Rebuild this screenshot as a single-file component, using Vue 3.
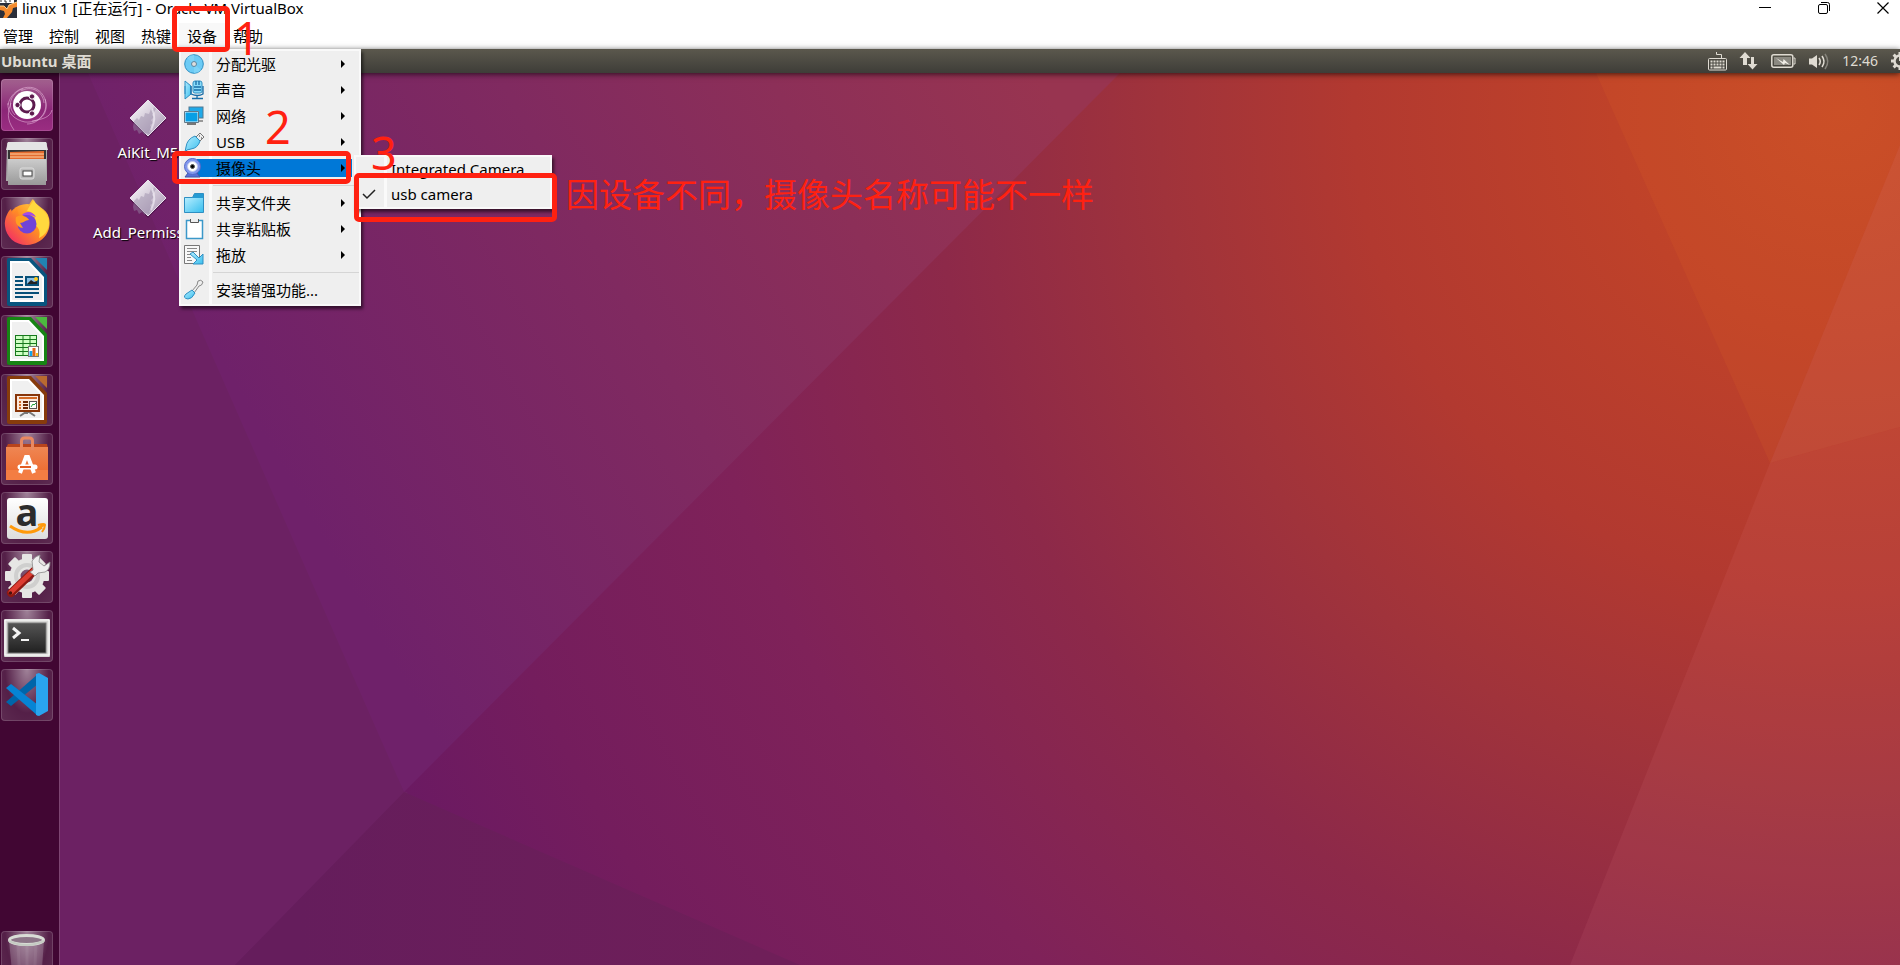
<script setup>
const menuNames = ['管理', '控制', '视图', '热键', '设备', '帮助']
const deviceItems = [
  { id: 'disc', label: '分配光驱', sub: true },
  { id: 'audio', label: '声音', sub: true },
  { id: 'network', label: '网络', sub: true },
  { id: 'usb', label: 'USB', sub: true },
  { id: 'webcam', label: '摄像头', sub: true, active: true },
  { id: 'sep1' },
  { id: 'folder', label: '共享文件夹', sub: true },
  { id: 'clipboard', label: '共享粘贴板', sub: true },
  { id: 'drag', label: '拖放', sub: true },
  { id: 'sep2' },
  { id: 'guest', label: '安装增强功能...' },
]
const cameras = [
  { label: 'Integrated Camera', checked: false },
  { label: 'usb camera', checked: true },
]
const shortcuts = [
  { label: 'AiKit_M5', clipped: false },
  { label: 'Add_Permiss', clipped: true },
]
const apps = ['dash', 'cabinet', 'firefox', 'writer', 'calc', 'impress', 'software', 'amazon', 'settings', 'terminal', 'code', 'trash']
const teeth = [0, 45, 90, 135, 180, 225, 270, 315]
</script>

<template>
  <div class="window">
    <header class="titlebar">
      <svg class="app-icon" width="17" height="18" viewBox="0 0 17 18">
        <rect width="17" height="18" fill="#2b2f3a" />
        <path d="M0 0h14v3H0z" fill="#fff" />
        <path d="M1 0v2M5 0v2h2M10 0v2" stroke="#333" fill="none" />
        <path d="M0 6h4l3 3 2-4 8-3v5l-4 1-1 4-5 6H3l2-4-1-3-4-1z" fill="#f58a2c" />
        <path d="M0 6h4l3 3 2-4 8-3" fill="none" stroke="#ffd08a" />
      </svg>
      <h1>linux 1 [正在运行] - Oracle VM VirtualBox</h1>
      <div class="controls">
        <button aria-label="最小化"><svg width="12" height="12" viewBox="0 0 12 12"><path d="M0 5.500h12" stroke="#000" /></svg></button>
        <button aria-label="还原"><svg width="12" height="12" viewBox="0 0 12 12" fill="none" stroke="#000"><rect x=".5" y="2.500" width="9" height="9" rx="1.500" /><path d="M3 .5h6.500a2 2 0 0 1 2 2V9" /></svg></button>
        <button aria-label="关闭"><svg width="12" height="12" viewBox="0 0 12 12"><path d="M.5.5l11 11M11.500.5l-11 11" stroke="#000" stroke-width="1.200" /></svg></button>
      </div>
    </header>

    <nav class="menubar">
      <button v-for="name in menuNames" :key="name" :class="{ open: name === '设备' }">{{ name }}</button>
    </nav>

    <div class="panel">
      <strong>Ubuntu 桌面</strong>
      <div class="tray">
        <svg width="19" height="19" viewBox="0 0 19 19" fill="none" stroke="#dfdbd2">
          <path d="M8.500 0v2.500h5V6" />
          <rect x=".5" y="6.500" width="18" height="11.500" rx="1" />
          <path d="M2.500 9.500h14M2.500 12.500h14" stroke-width="2" stroke-dasharray="2 1" />
          <path d="M2.500 15.500h2M5.500 15.500h8M14.500 15.500h2" stroke-width="2" />
        </svg>
        <svg width="18" height="18" viewBox="0 0 18 18" fill="#dfdbd2"><path d="M5 0l5.500 6H7v7H3V6H-.5zM12.500 17.500L7.500 12H11V5h3v7h3.500z" /></svg>
        <svg width="25" height="14" viewBox="0 0 25 14" fill="none" stroke="#dfdbd2">
          <rect x=".8" y=".8" width="21" height="12.400" rx="2" stroke-width="1.500" />
          <rect x="3" y="3" width="17" height="8" fill="#8b8981" stroke="none" />
          <path d="M22.500 4h1.500v6h-1.500" />
          <path d="M5 4l7 4 .5-3L19 11l-5-2-1 2z" fill="#efece5" stroke="none" />
        </svg>
        <svg width="20" height="17" viewBox="0 0 20 17" fill="none" stroke="#dfdbd2" stroke-width="1.600">
          <path d="M0 5.500h3L8 2v13l-5-3.500H0z" fill="#dfdbd2" stroke="none" />
          <path d="M10 5q2.500 3.500 0 7" /><path d="M13 3q4 5.500 0 11" /><path d="M16 1q5.500 7.500 0 15" stroke="#85837b" />
        </svg>
        <time>12:46</time>
        <svg class="power" width="18" height="18" viewBox="-9 -9 18 18">
          <rect v-for="t in teeth" :key="t" x="-1.500" y="-9" width="3" height="4" fill="#dfdbd2" :transform="`rotate(${t})`" />
          <circle r="5.500" fill="none" stroke="#dfdbd2" stroke-width="2.500" />
          <path d="M0-5v5" stroke="#dfdbd2" stroke-width="2" />
        </svg>
      </div>
    </div>

    <main class="workspace">
      <aside class="launcher">
        <button v-for="app in apps" :key="app" class="tile" :class="app" :aria-label="app">
          <svg v-if="app === 'dash'" viewBox="0 0 52 52" fill="none">
            <g stroke="#f4c9ea" stroke-opacity=".5">
              <path d="M7 26C10 8 36 0 44 20c4 12-6 25-18 25" />
              <path d="M44 20c5 15-6 24-20 23C14 41 6 34 7 24" />
              <path d="M20 12c10-6 22 0 23 12M14 36C4 26 12 12 22 10M31 42c12-2 18-4 20-11M13 51C5 40 7 32 10 24" />
            </g>
            <circle cx="26" cy="26" r="14" fill="#fff" />
            <circle cx="26" cy="26" r="7" stroke="#5d1a4e" stroke-width="3" />
            <g fill="#5d1a4e" stroke="#fff"><circle cx="16.500" cy="26" r="2.700" /><circle cx="31" cy="17.500" r="2.700" /><circle cx="31" cy="34.500" r="2.700" /></g>
          </svg>
          <svg v-else-if="app === 'cabinet'" viewBox="0 0 52 52">
            <path d="M6 5l2-1h36l2 1v38H5z" fill="#aaa" /><path d="M7 4h38l2 8H5z" fill="#e4e4e4" />
            <path d="M7 12h38v10H7z" fill="#353535" /><path d="M9 14l34-1v9H9z" fill="#e46b2e" />
            <path d="M9 16h34M9 19h34" stroke="#ffd2a2" /><path d="M7 21h38v26H7z" fill="url(#silver)" />
            <rect x="19" y="30" width="14" height="11" rx="2" fill="#bbb" stroke="#ddd" /><rect x="22" y="33" width="9" height="5" fill="#fff" stroke="#444" />
          </svg>
          <svg v-else-if="app === 'firefox'" viewBox="0 0 52 52">
            <circle cx="26" cy="27" r="20" fill="url(#fox)" />
            <path d="M4 29C3 22 7 14 10 12l2 6 4-7 2 8 9-2-5 12 5 5c10-1 11-10 6-15l-6-5C26 9 31 3 32 2c2 7 14 9 16 19 3 12-5 26-22 27C14 48 5 40 4 29z" fill="url(#fox)" />
            <path d="M26 14c2-5 5-8 7-11 2 7 15 11 15 23 0 7-5 13-10 15 2-7-1-12-5-13 4-8-2-14-7-14z" fill="#ffd83e" />
            <circle cx="26" cy="27" r="9.500" fill="#7044d8" />
            <path d="M15 20c5-3 12 0 13 3-4 0-5 3-9 3l3 5c-7-1-8-7-7-11z" fill="#ff9d22" />
            <path d="M21 18c5-5 11-3 14 2-4-2-8-2-14-2z" fill="#a44be8" />
          </svg>
          <svg v-else-if="app === 'writer' || app === 'calc' || app === 'impress'" viewBox="0 0 52 52">
            <path class="doc" d="M8 2h22l16 17v29q0 2-2 2H8q-2 0-2-2V4q0-2 2-2z" />
            <path d="M9 5h19l15 16v25H9z" fill="#fff" /><path d="M11 7h16l14 15v22H11z" fill="#f0f0f0" />
            <path class="doc-fold" d="M34 2h12v12z" />
            <g v-if="app === 'writer'" stroke="#075078" stroke-width="2">
              <path d="M14 21h8M14 25h8M14 29h8M14 33h24M14 37h24M14 41h18" />
              <rect x="25" y="21" width="12" height="8" fill="#8cc1e5" /><path d="M26 28l4-4 3 2 3-1v3z" fill="#222" stroke="none" /><circle cx="35" cy="23" r="1" fill="#ffcc20" stroke="#ffcc20" />
            </g>
            <g v-else-if="app === 'calc'">
              <rect x="14" y="20" width="22" height="21" fill="#16781d" />
              <path d="M15 22.500h20M15 26.500h20M15 30.500h20M15 34.500h20M15 38.500h20" stroke="#cfffc4" stroke-width="3" /><path d="M22 20v21M29 20v21" stroke="#16781d" />
              <rect x="27.500" y="31.500" width="10" height="10" fill="#fff" stroke="#777" /><path d="M30 41v-5" stroke="#12a4e8" stroke-width="3" /><path d="M33 41v-8" stroke="#e36718" stroke-width="3" /><path d="M36 41v-3" stroke="#fbbd17" stroke-width="2" />
            </g>
            <g v-else>
              <path d="M19 42l6-4h3l6 4M26 37v3" stroke="#777" fill="none" stroke-width="2" />
              <rect x="15" y="21" width="23" height="16" fill="#fce8dc" stroke="#873509" stroke-width="2" />
              <path d="M18 24h18" stroke="#d36a25" stroke-width="2" /><path d="M18 28h2M18 31h2M18 34h2" stroke="#d36a25" stroke-width="2" /><path d="M22 28h5M22 31h5M22 34h5" stroke="#6d2605" stroke-width="2" />
              <rect x="28.500" y="27.500" width="7" height="7" fill="#fff" stroke="#555" /><path d="M30 33l2-3 1 1 2-2" stroke="#21a43b" fill="none" />
            </g>
          </svg>
          <svg v-else-if="app === 'software'" viewBox="0 0 52 52">
            <path d="M7 11h39l1 4H5z" fill="#b8441c" /><path d="M5 14h42v33H5z" fill="url(#orange)" /><path d="M5 37h42v10H5z" fill="#f37d43" />
            <path d="M20.500 17V8q0-3 3-3h5q3 0 3 3v9" fill="none" stroke="#e98861" stroke-width="3" />
            <path d="M19 40l6-16h2l6 16" fill="none" stroke="#fff" stroke-width="4" /><path d="M19 34h15" stroke="#fff" stroke-width="5" stroke-linecap="round" /><path d="M19 34h11" stroke="#e35d22" stroke-width="2" />
          </svg>
          <svg v-else-if="app === 'amazon'" viewBox="0 0 52 52">
            <rect x="6" y="6" width="41" height="41" rx="3" fill="url(#paper)" />
            <text x="26" y="34" text-anchor="middle" font-size="38" font-weight="700" font-family="Open Sans, sans-serif" fill="#2c2c2c">a</text>
            <path d="M9 34q17 12 32 1" fill="none" stroke="#ff9a0b" stroke-width="3" /><path d="M37 33q7-2 7 0 0 3-3 7M43 33l-6 3" fill="none" stroke="#ff9a0b" stroke-width="2" />
          </svg>
          <svg v-else-if="app === 'settings'" viewBox="0 0 52 52">
            <g transform="translate(26 25)" fill="#e6e6e4"><rect v-for="t in teeth" :key="t" x="-5" y="-22" width="10" height="12" rx="1" :transform="`rotate(${t})`" /><circle r="12" fill="none" stroke="#e6e6e4" stroke-width="11" /><circle r="11" fill="none" stroke="#cfcfce" stroke-width="4" /></g>
            <path d="M10 42L33 20" stroke="#8f1912" stroke-width="8" stroke-linecap="round" /><path d="M10 41L32 20" stroke="#dc3c31" stroke-width="5" stroke-linecap="round" />
            <path d="M32 19l-1-9q3-5 8-6l-1 7 5 4 6-4q0 8-5 10l-7 1-3 3-5-4z" fill="#eee" stroke="#888" stroke-width=".8" /><circle cx="9.500" cy="42" r="1.700" fill="#47100d" />
          </svg>
          <svg v-else-if="app === 'terminal'" viewBox="0 0 52 52">
            <rect x="3" y="9" width="46" height="38" rx="1" fill="#d8d8d6" /><path d="M4 10h44v35H4z" fill="none" stroke="#fff" /><rect x="7" y="13" width="38" height="30" fill="url(#screen)" stroke="#777" />
            <path d="M12 18l6 5-6 5" fill="none" stroke="#f3f3f3" stroke-width="3" /><path d="M20 30h8" stroke="#f3f3f3" stroke-width="2" />
          </svg>
          <svg v-else-if="app === 'code'" viewBox="0 0 52 52">
            <path d="M5 33l5 4 27-22V5L5 33z" fill="#0065a9" /><path d="M5 19l5-4 27 21v11L5 19z" fill="#0684d4" /><path d="M35 5l3-1 9 5v33l-9 5-3-1z" fill="#2aa4ef" />
          </svg>
          <svg v-else viewBox="0 0 52 52">
            <path d="M8 9l4 43h28l3-43z" fill="#fff" opacity=".2" /><path d="M17 14l2 38M26 14v38M35 14l-2 38" stroke="#fff" opacity=".06" stroke-width="3" />
            <ellipse cx="25.500" cy="9" rx="17" ry="4.500" fill="#8d7588" stroke="#d9ddd6" stroke-width="3" /><path d="M8 10q17 8 35 0" fill="none" stroke="#c5cbc3" stroke-width="2" />
          </svg>
        </button>
      </aside>

      <section class="desktop">
        <svg class="wallpaper" viewBox="60 73 1840 892" preserveAspectRatio="none" aria-hidden="true">
          <defs>
            <radialGradient id="base" gradientUnits="userSpaceOnUse" cx="1840" cy="110" r="1620">
              <stop offset="0" stop-color="#c74a28" /><stop offset=".14" stop-color="#bf4229" /><stop offset=".3" stop-color="#b23930" /><stop offset=".42" stop-color="#a0333b" /><stop offset=".56" stop-color="#8d2949" /><stop offset=".72" stop-color="#7f2259" /><stop offset=".88" stop-color="#741d5d" /><stop offset="1" stop-color="#691963" />
            </radialGradient>
            <linearGradient id="upper" gradientUnits="userSpaceOnUse" x1="300" y1="500" x2="1040" y2="80">
              <stop offset="0" stop-color="#6f216a" /><stop offset=".45" stop-color="#802a60" /><stop offset="1" stop-color="#983450" />
            </linearGradient>
            <linearGradient id="foot" gradientUnits="userSpaceOnUse" x1="300" y1="960" x2="760" y2="960"><stop offset="0" stop-color="#651d5c" /><stop offset="1" stop-color="#6f1f59" /></linearGradient>
            <linearGradient id="silver" x2="0" y2="1"><stop stop-color="#ccc" /><stop offset="1" stop-color="#999" /></linearGradient>
            <linearGradient id="paper" x2="0" y2="1"><stop stop-color="#fff" /><stop offset="1" stop-color="#ddd" /></linearGradient>
            <linearGradient id="screen" x2="0" y2="1"><stop stop-color="#555" /><stop offset="1" stop-color="#202020" /></linearGradient>
            <linearGradient id="orange" x2="0" y2="1"><stop stop-color="#ef8653" /><stop offset="1" stop-color="#ec6528" /></linearGradient>
            <linearGradient id="fox" x1="1" x2="0" y2="1"><stop stop-color="#ffe344" /><stop offset=".5" stop-color="#ff8c25" /><stop offset="1" stop-color="#f01873" /></linearGradient>
            <linearGradient id="cyan" x2="1" y2="1"><stop stop-color="#b5edff" /><stop offset="1" stop-color="#39bfee" /></linearGradient>
            <linearGradient id="diamond" x2="1" y2="1"><stop stop-color="#fff" /><stop offset="1" stop-color="#a693b1" /></linearGradient>
          </defs>
          <path d="M60 73H1900V965H60z" fill="url(#base)" />
          <path d="M60 73H120L404 792 408 792 235 965H60z" fill="#6c2163" />
          <path d="M88 73H1120L404 792z" fill="url(#upper)" />
          <path d="M404 792L800 965H235z" fill="url(#foot)" />
          <path d="M1596 73H1900V145L1770 463z" fill="#ff8a20" fill-opacity=".08" />
          <path d="M1900 145V427L1770 463z" fill="#ffb090" fill-opacity=".11" />
          <path d="M1770 463l130-36V965H1570z" fill="#ff9aa0" fill-opacity=".08" />
        </svg>
        <ul class="shortcuts">
          <li v-for="item in shortcuts" :key="item.label">
            <svg width="40" height="40" viewBox="0 0 40 40">
              <path d="M20 2l18 19-18 18L2 21z" fill="#2d0d2c" opacity=".4" />
              <path d="M20 1l18 18-18 18L2 19z" fill="url(#diamond)" stroke="#e8e0ed" />
              <path d="M6 22l3-3 2 2 2-4 3 1 1-4 4 1 2-5 2 1 1-3 2 2-4 6 2 2-3 3 2 3-3 2 2 4-3 2 1 3-4-1-1 2-3-3-3 2-2-4-3 1-1-4z" fill="#968aa7" opacity=".45" />
              <path d="M24 10q5 9-1 21" fill="none" stroke="#f7f3fa" stroke-width="2" opacity=".6" />
            </svg>
            <span :class="{ clipped: item.clipped }">{{ item.label }}</span>
          </li>
        </ul>
      </section>
    </main>

    <div class="popup devices" role="menu">
      <template v-for="item in deviceItems" :key="item.id">
        <hr v-if="!item.label">
        <button v-else role="menuitem" :class="{ active: item.active }">
          <svg width="20" height="20" viewBox="0 0 20 20" fill="url(#cyan)" stroke="#2f8fc2">
            <g v-if="item.id === 'disc'"><circle cx="10" cy="10" r="9.300" fill="#6ccbf5" /><path d="M10 10L3 4Q6 1 10 1zM10 10l7 6q-3 3-7 3z" fill="#7dd3f7" stroke="none" /><circle cx="10" cy="10" r="2.500" fill="#ddd" stroke="#5b87a0" /></g>
            <g v-else-if="item.id === 'audio'"><path d="M1 1l6 5v8l-6 5zM1 6v8" /><rect x="9" y="1" width="9" height="12" rx="2" fill="#89dcfa" /><path d="M12 1v4M15 1v4M10 7h7M10 10h7M7 6v8q7 3 12 0V6M13 15v4M8 18.500h11" fill="none" stroke="#176ca6" stroke-width="1.300" /></g>
            <g v-else-if="item.id === 'network'"><rect x="5" y="1" width="14" height="11" fill="#20a9e8" stroke="#507991" /><path d="M14 15h5" stroke="#999" stroke-width="2" /><rect x="1" y="6" width="13" height="10" fill="#079fe5" stroke="#e0f2fb" /><path d="M.5 5.500h14v11H.5z" fill="none" stroke="#607888" /><path d="M3 18h9" stroke="#777" stroke-width="2" /></g>
            <g v-else-if="item.id === 'usb'"><path d="M12 5l4-4 4 4-4 4z" fill="#eee" stroke="#777" /><path d="M15 4h1M17 6h1" stroke="#333" /><path d="M11 4l5 5q-2 7-9 8l-4 1-2 2 1-5Q3 7 11 4z" /></g>
            <g v-else-if="item.id === 'webcam'"><path d="M4 15h9l3 4H1z" fill="#5870d8" stroke="#4356a8" /><circle cx="8.500" cy="8.500" r="8" fill="#8298ed" stroke="#5369c8" /><circle cx="8.500" cy="8.500" r="5" fill="#fff" stroke="#c1caed" /><circle cx="8.500" cy="8.500" r="2" fill="#000" stroke="#555" /></g>
            <g v-else-if="item.id === 'folder'"><path d="M.5 4.500h8l2-4h9v19H.5z" fill="#259bd3" /><path d="M1 5h18v14H1z" stroke="none" /></g>
            <g v-else-if="item.id === 'clipboard'"><path d="M2.500 1.500h16v18h-16z" fill="#fff" stroke="#3b98c9" stroke-width="1.500" /><path d="M6.500 0v3.500h8V0" fill="#eee" stroke="#555" /></g>
            <g v-else-if="item.id === 'drag'"><path d="M.5.5h15v18H.5z" fill="#f8f8f8" stroke="#777" /><path d="M3 3.500h10M3 6.500h10M3 9.500h5M3 12.500h4M3 15.500h5" stroke="#888" /><path d="M6 9l3-2 6 6 4-4v10H9l4-4z" /></g>
            <g v-else><path d="M8 11l5-6 1-4q3-2 5 1-1 4-4 4l-5 7" fill="#eee" stroke="#888" /><path d="M8 10l3 3q-3 6-7 6-6-1-2-5z" /></g>
          </svg>
          <span>{{ item.label }}</span>
          <i v-if="item.sub" class="arrow"></i>
        </button>
      </template>
    </div>

    <div class="popup cameras" role="menu">
      <button v-for="cam in cameras" :key="cam.label" role="menuitemcheckbox" :aria-checked="cam.checked">
        <svg width="14" height="10" viewBox="0 0 14 10"><path v-if="cam.checked" d="M1 4l4 4 8-8" fill="none" stroke="#222" stroke-width="1.500" /></svg>
        <span>{{ cam.label }}</span>
      </button>
    </div>

    <div class="mark mark-menu"></div>
    <div class="mark mark-webcam"></div>
    <div class="mark mark-camera"></div>
    <span class="step step-one">1</span>
    <span class="step step-two">2</span>
    <span class="step step-three">3</span>
    <p class="note">因设备不同，摄像头名称可能不一样</p>
  </div>
</template>

<style>
body { margin: 0; overflow: hidden; }
</style>

<style scoped>
.window {
  position: relative;
  display: flex;
  flex-direction: column;
  height: 100vh;
  overflow: hidden;
  background: #fff;
  color: #000;
  font: 15px/20px "Noto Sans", "Noto Sans CJK SC", sans-serif;
}
button { border: 0; padding: 0; background: none; color: inherit; font: inherit; }
svg { display: block; flex: none; overflow: visible; }
.titlebar { display: flex; align-items: center; height: 17px; }
h1 { margin: 0 0 1px 5px; font-size: 15px; font-weight: 400; line-height: 16px; white-space: nowrap; }
.app-icon { width: 17px; height: 18px; overflow: hidden; }
.controls { display: flex; gap: 47px; margin: 0 11px 2px auto; }
.menubar { display: flex; height: 26px; padding-top: 6px; margin-left: -5px; }
.menubar button { padding: 0 8px; }
.menubar .open { background: #f8f8f8; }
.panel {
  position: relative;
  z-index: 1;
  display: flex;
  align-items: center;
  justify-content: space-between;
  height: 24px;
  padding-left: 1px;
  background: linear-gradient(#5b584d, #3e3d38);
  color: #dfdbd2;
  box-shadow: 0 1px 6px rgba(0, 0, 0, .7);
}
.tray { display: flex; align-items: center; gap: 13px; margin-right: -9px; }
time { font-size: 14px; }
.workspace { display: flex; flex: 1; min-height: 0; }
.launcher {
  display: flex;
  flex-direction: column;
  gap: 7px;
  flex: none;
  width: 58px;
  padding: 6px 0 0 1px;
  background: #410633;
  border-right: 1px solid #7d4672;
}
.tile {
  flex: none;
  width: 52px;
  height: 52px;
  border-radius: 4px;
  background: radial-gradient(ellipse at 50% 0, rgba(255, 255, 255, .5), rgba(255, 255, 255, .1) 60%, rgba(255, 255, 255, .15));
  box-shadow: inset 0 0 0 1px rgba(255, 255, 255, .15);
}
.dash { background: linear-gradient(#a3628f, #8b2677 60%, #9b2d82); }
.trash { margin-top: auto; margin-bottom: -18px; }
.writer .doc { fill: #08557f; }
.writer .doc-fold { fill: #2183b2; }
.calc .doc { fill: #178414; }
.calc .doc-fold { fill: #4cb93f; }
.impress .doc { fill: #873b0c; }
.impress .doc-fold { fill: #b96a30; }
.desktop { position: relative; flex: 1; }
.wallpaper { position: absolute; inset: 0; width: 100%; height: 100%; overflow: hidden; }
.shortcuts {
  position: relative;
  display: flex;
  flex-direction: column;
  gap: 17px;
  width: 110px;
  margin: 26px 0 0 33px;
  padding: 0;
  list-style: none;
  color: #fff;
  text-shadow: 1px 1px 1px #000;
}
.shortcuts li { display: flex; flex-direction: column; align-items: center; gap: 3px; }
.shortcuts .clipped { align-self: flex-start; }
.popup {
  position: absolute;
  z-index: 2;
  display: flex;
  flex-direction: column;
  box-sizing: border-box;
  border: 2px solid #f9f9f9;
  background: linear-gradient(90deg, #efefef 28px, #fafafa 28px, #fafafa 31px, #efefef 31px);
  box-shadow: 2px 3px 3px rgba(0, 0, 0, .55);
}
.devices { top: 49px; left: 179px; width: 182px; padding-bottom: 1px; }
.popup button { display: flex; align-items: center; text-align: left; white-space: nowrap; }
.popup span { padding-bottom: 1px; }
.devices button { height: 26px; padding: 0 14px 0 3px; gap: 12px; }
.devices .active { background: linear-gradient(#0078d7, #0078d7) 16px 4px / 155px 18px no-repeat; }
.arrow { margin-left: auto; border: 4px solid transparent; border-left-color: #000; border-right: 0; }
hr { width: 146px; height: 1px; margin: 4px 0 4px auto; border: 0; background: #d5d5d5; }
.cameras { top: 155px; left: 354px; width: 198px; }
.cameras button { height: 25px; padding-left: 6px; gap: 15px; }
.mark { position: absolute; z-index: 3; box-sizing: border-box; border: 5px solid #ff2111; border-radius: 5px; }
.mark-menu { top: 6px; left: 172px; width: 58px; height: 46px; }
.mark-webcam { top: 151px; left: 172px; width: 179px; height: 33px; }
.mark-camera { top: 173px; left: 354px; width: 203px; height: 49px; }
.step { position: absolute; z-index: 3; color: #ff2111; font-size: 45px; line-height: 46px; }
.step-one { top: 15px; left: 234px; }
.step-two { top: 104px; left: 265px; }
.step-three { top: 130px; left: 371px; }
.note { position: absolute; z-index: 3; top: 173px; left: 566px; margin: 0; color: #ff2111; font: 33px/40px "Noto Sans CJK SC", sans-serif; white-space: nowrap; }
</style>
